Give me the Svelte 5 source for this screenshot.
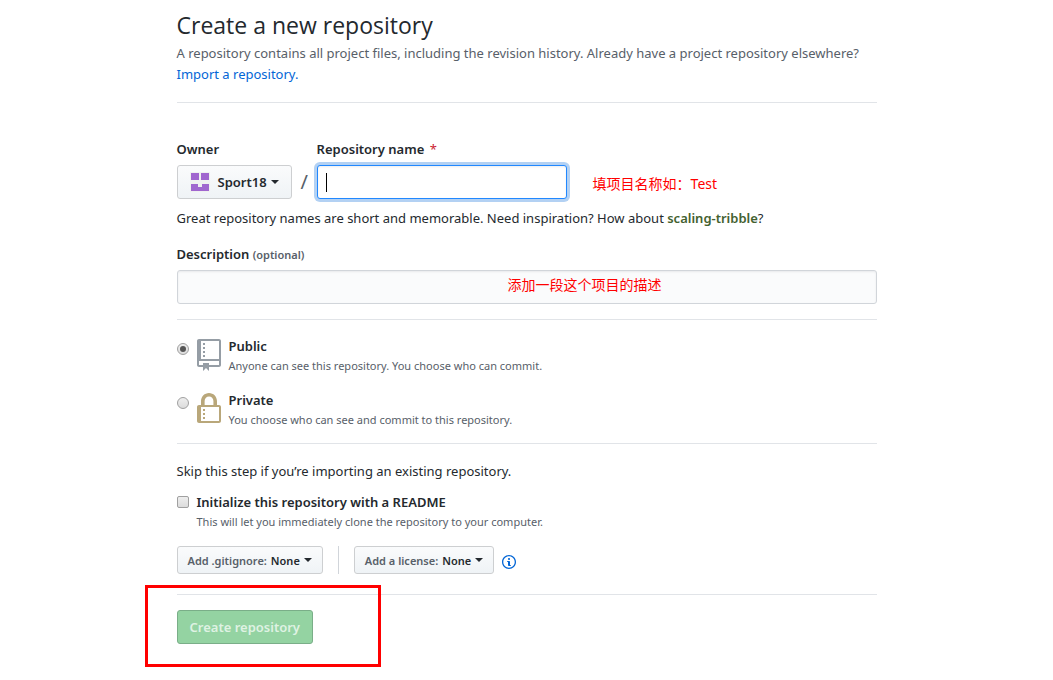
<script lang="ts">
    let repoName = $state("")
    let description = $state("")
    let visibility = $state("public")
    let readme = $state(false)

    const suggestion = "scaling-tribble"

    const useSuggestion = () => {
        repoName = suggestion;
    }
</script>

<main>
    <header>
        <h1>Create a new repository</h1>
        <p>
            A repository contains all project files, including the revision history. Already have a project repository elsewhere?
            <a href="#import">Import a repository.</a>
        </p>
    </header>

    <form onsubmit={(e) => e.preventDefault()}>
        <div class="nameRow">
            <div class="field">
                <label for="owner">Owner</label>
                <button id="owner" class="btn" type="button">
                    <svg class="avatar" viewBox="0 0 20 20" aria-hidden="true">
                        <rect width="20" height="20" fill="#f0f0f0" />
                        <path fill="#a066cf" d="M1 1h8v7H1zM11 1h8v7h-8zM1 12h7v3h4v-3h7v7H1z" />
                    </svg>
                    <span>Sport18</span>
                    <i class="caret"></i>
                </button>
            </div>
            <span class="slash">/</span>
            <div class="field">
                <label for="name">Repository name <span class="required">*</span></label>
                <div class="nameBox">
                    <input id="name" type="text" bind:value={repoName} />
                    {#if !repoName}<span class="cursor"></span>{/if}
                </div>
            </div>
            <span class="tip">填项目名称如：Test</span>
        </div>
        <p class="hint">
            Great repository names are short and memorable. Need inspiration? How about
            <button class="suggestion" type="button" onclick={useSuggestion}>{suggestion}</button>?
        </p>

        <div class="field description">
            <label for="description">Description <small>(optional)</small></label>
            <div class="descriptionBox">
                <input id="description" type="text" bind:value={description} />
                <span class="note">添加一段这个项目的描述</span>
            </div>
        </div>

        <section class="visibility">
            <div class="choice">
                <input id="public" type="radio" value="public" bind:group={visibility} />
                <svg class="public" viewBox="0 0 12 16" aria-hidden="true">
                    <path fill-rule="evenodd" d="M4 9H3V8h1v1zm0-3H3v1h1V6zm0-2H3v1h1V4zm0-2H3v1h1V2zm8-1v12c0 .55-.45 1-1 1H6v2l-1.5-1.5L3 16v-2H1c-.55 0-1-.45-1-1V1c0-.55.45-1 1-1h10c.55 0 1 .45 1 1zm-1 10H1v2h2v-1h3v1h5v-2zm0-10H2v9h9V1z" />
                </svg>
                <div>
                    <label for="public">Public</label>
                    <p>Anyone can see this repository. You choose who can commit.</p>
                </div>
            </div>
            <div class="choice">
                <input id="private" type="radio" value="private" bind:group={visibility} />
                <svg class="private" viewBox="0 0 12 16" aria-hidden="true">
                    <path fill-rule="evenodd" d="M4 13H3v-1h1v1zm8-6v7c0 .55-.45 1-1 1H1c-.55 0-1-.45-1-1V7c0-.55.45-1 1-1h1V4c0-2.2 1.8-4 4-4s4 1.8 4 4v2h1c.55 0 1 .45 1 1zM3.8 6h4.41V4c0-1.22-.98-2.2-2.2-2.2-1.22 0-2.2.98-2.2 2.2v2H3.8zM11 7H2v7h9V7zM4 8H3v1h1V8zm0 2H3v1h1v-1z" />
                </svg>
                <div>
                    <label for="private">Private</label>
                    <p>You choose who can see and commit to this repository.</p>
                </div>
            </div>
        </section>

        <section class="setup">
            <p class="skip">Skip this step if you’re importing an existing repository.</p>
            <div class="choice">
                <input id="readme" type="checkbox" bind:checked={readme} />
                <div>
                    <label for="readme">Initialize this repository with a README</label>
                    <p>This will let you immediately clone the repository to your computer.</p>
                </div>
            </div>
            <div class="templates">
                <button class="btn small" type="button"><em>Add .gitignore:</em> <span>None</span> <i class="caret"></i></button>
                <span class="divider"></span>
                <button class="btn small" type="button"><em>Add a license:</em> <span>None</span> <i class="caret"></i></button>
                <a class="info" href="#licenses" aria-label="About licenses">
                    <svg viewBox="0 0 14 16" aria-hidden="true">
                        <path fill-rule="evenodd" d="M6.3 5.69a.942.942 0 0 1-.28-.7c0-.28.09-.52.28-.7.19-.18.42-.28.7-.28.28 0 .52.09.7.28.18.19.28.42.28.7 0 .28-.09.52-.28.7a1 1 0 0 1-.7.3c-.28 0-.52-.11-.7-.3zM8 7.99c-.02-.25-.11-.48-.31-.69-.2-.19-.42-.3-.69-.31H6c-.27.02-.48.13-.69.31-.2.2-.3.44-.31.69h1v3c.02.27.11.5.31.69.2.2.42.31.69.31h1c.27 0 .48-.11.69-.31.2-.19.3-.42.31-.69H8V7.98v.01zM7 2.3c-3.14 0-5.7 2.54-5.7 5.68 0 3.14 2.56 5.7 5.7 5.7s5.7-2.55 5.7-5.7c0-3.15-2.56-5.69-5.7-5.69v.01zM7 .98c3.86 0 7 3.14 7 7s-3.14 7-7 7-7-3.12-7-7 3.14-7 7-7z" />
                    </svg>
                </a>
            </div>
        </section>

        <div class="submit">
            <button class="create" type="submit" disabled={!repoName}>Create repository</button>
            <span class="highlight"></span>
        </div>
    </form>
</main>

<style>
    :global(body) {
        margin: 0;
        background: #fff;
    }

    main {
        max-width: 700px;
        margin: 0 auto;
        padding: 8px 0 24px;
        font-family: "Noto Sans", "Open Sans", "Noto Sans CJK SC", sans-serif;
        font-size: 13px;
        line-height: 21px;
        color: #24292e;
    }

    main * {
        box-sizing: border-box;
    }

    h1, p {
        margin: 0;
    }

    h1 {
        font-family: "Open Sans", sans-serif;
        font-size: 23px;
        font-weight: 400;
        line-height: 35px;
    }

    header {
        padding-bottom: 17px;
        border-bottom: 1px solid #e1e4e8;
        color: #586069;
    }

    header h1 {
        color: #24292e;
    }

    a {
        color: #0366d6;
        text-decoration: none;
    }

    button, input {
        font: inherit;
        color: inherit;
    }

    label {
        font-weight: 600;
    }

    .nameRow {
        display: flex;
        align-items: flex-end;
        margin-top: 36px;
    }

    .field {
        display: flex;
        flex-direction: column;
        gap: 5px;
    }

    .btn {
        display: flex;
        align-items: center;
        height: 34px;
        padding: 0 12px;
        border: 1px solid #cdcfd1;
        border-radius: 3px;
        background: linear-gradient(#fafbfc, #eff3f6);
        font-weight: 600;
        white-space: nowrap;
    }

    .caret {
        margin-left: 4px;
        border: 4px solid transparent;
        border-top-color: #24292e;
        border-bottom: 0;
    }

    .avatar {
        width: 20px;
        height: 20px;
        margin-right: 8px;
    }

    .slash {
        width: 25px;
        font-size: 20px;
        line-height: 34px;
        text-align: center;
        color: #586069;
    }

    .required {
        margin-left: 2px;
        font-weight: 400;
        color: #cb2431;
    }

    .nameBox, .descriptionBox, .submit {
        position: relative;
    }

    input[type="text"] {
        display: block;
        width: 100%;
        height: 34px;
        padding: 6px 8px;
        border: 1px solid #d1d5da;
        border-radius: 3px;
        background: #fafbfc;
        box-shadow: inset 0 1px 2px rgba(27, 31, 35, 0.075);
        outline: none;
    }

    .nameBox {
        width: 250px;
    }

    input#name {
        border-color: #2188ff;
        background: #fff;
        box-shadow: inset 0 1px 2px rgba(27, 31, 35, 0.075), 0 0 0 3px rgba(3, 102, 214, 0.3);
    }

    .cursor {
        position: absolute;
        left: 9px;
        top: 8px;
        width: 1px;
        height: 19px;
        background: #000;
    }

    .tip, .note {
        font-size: 14px;
        color: #f00;
    }

    .tip {
        margin: 0 0 5px 26px;
    }

    .hint {
        margin-top: 9px;
    }

    .suggestion {
        padding: 0;
        border: 0;
        background: none;
        font-weight: 600;
        color: #43612f;
    }

    .description {
        margin-top: 15px;
    }

    small {
        font-size: 11px;
        color: #586069;
    }

    .note {
        position: absolute;
        left: 331px;
        top: 4px;
    }

    .visibility {
        margin-top: 15px;
        padding: 16px 0 14px;
        border: solid #e1e4e8;
        border-width: 1px 0;
    }

    .choice {
        display: flex;
        align-items: flex-start;
    }

    .choice + .choice {
        margin-top: 15px;
    }

    .choice svg {
        width: 24px;
        height: 32px;
        margin: 3px 8px 0 0;
    }

    .choice p {
        font-size: 11px;
        line-height: 18px;
        color: #586069;
    }

    .choice label {
        display: block;
    }

    .public {
        fill: #959da5;
    }

    .private {
        fill: #b9a77a;
    }

    input[type="radio"], input[type="checkbox"] {
        appearance: none;
        display: grid;
        place-items: center;
        flex: none;
        width: 12px;
        height: 12px;
        margin: 4px 8px 0 0;
        border: 1px solid #a0a0a0;
        border-radius: 2px;
        background: linear-gradient(#eee, #dcdcdc);
    }

    input[type="radio"] {
        margin-top: 7px;
        border-radius: 50%;
    }

    input:checked::before {
        content: "";
        width: 6px;
        height: 6px;
        border-radius: 50%;
        background: #555;
    }

    .skip {
        margin: 17px 0 10px;
    }

    .templates {
        display: flex;
        align-items: center;
        margin-top: 15px;
        padding-bottom: 20px;
        border-bottom: 1px solid #e1e4e8;
    }

    .small {
        gap: 4px;
        height: 28px;
        padding: 0 10px;
        font-size: 11px;
    }

    .small .caret {
        margin-left: 0;
    }

    em {
        font-style: normal;
        color: #586069;
    }

    .divider {
        width: 1px;
        height: 28px;
        margin: 0 15px;
        background: #d1d5da;
    }

    .info {
        display: flex;
        margin: 4px 0 0 8px;
    }

    .info svg {
        width: 14px;
        height: 16px;
        fill: #0366d6;
    }

    .submit {
        margin-top: 15px;
    }

    .create {
        display: block;
        height: 34px;
        padding: 0 12px;
        border: 1px solid #7aae88;
        border-radius: 3px;
        background: #94d3a2;
        font-weight: 600;
        color: #dff2e3;
    }

    .highlight {
        position: absolute;
        left: -32px;
        top: -25px;
        width: 236px;
        height: 82px;
        border: 3px solid #f00;
        pointer-events: none;
    }
</style>
